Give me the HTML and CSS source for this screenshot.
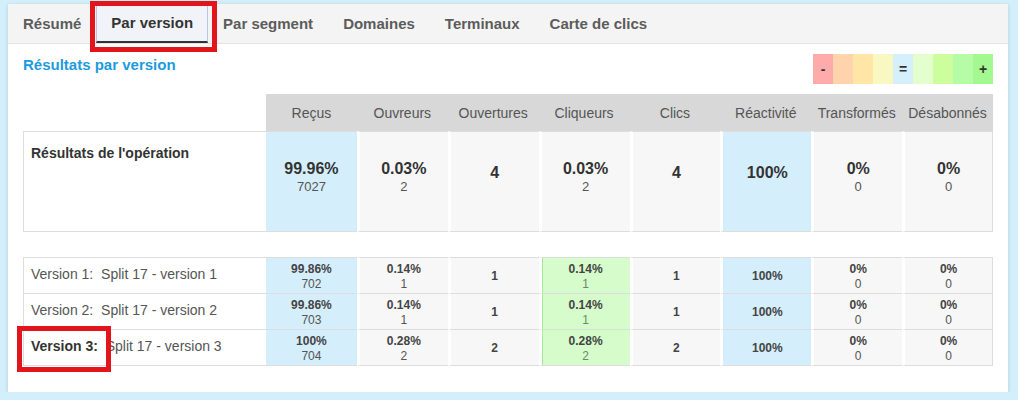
FILE: index.html
```html
<!DOCTYPE html>
<html lang="fr">
<head>
<meta charset="UTF-8">
<meta name="viewport" content="width=device-width, initial-scale=1.0">
<link rel="stylesheet" href="styles.css">
<title>Résultats par version</title>
</head>
<body>

<main class="page">

<div class="card">

<nav class="tabs">
<span class="tab">Résumé</span>
<span class="tab active">Par version<i class="mark markTab"></i></span>
<span class="tab">Par segment</span>
<span class="tab">Domaines</span>
<span class="tab">Terminaux</span>
<span class="tab">Carte de clics</span>
</nav>

<div class="content">

<div class="titleRow">
<h2 class="title">Résultats par version</h2>
<div class="legend">
<b class="c1">-</b><b class="c2"></b><b class="c3"></b><b class="c4"></b><b class="c5">=</b><b class="c6"></b><b class="c7"></b><b class="c8"></b><b class="c9">+</b>
</div>
</div>

<table class="stats mainStats">
<colgroup><col class="labelCol"><col span="8"></colgroup>
<tr>
<th class="blank"></th>
<th>Reçus</th>
<th>Ouvreurs</th>
<th>Ouvertures</th>
<th>Cliqueurs</th>
<th>Clics</th>
<th>Réactivité</th>
<th>Transformés</th>
<th>Désabonnés</th>
</tr>
<tr>
<td class="label">Résultats de l'opération</td>
<td class="blue"><b>99.96%</b><span>7027</span></td>
<td><b>0.03%</b><span>2</span></td>
<td class="one"><b>4</b></td>
<td><b>0.03%</b><span>2</span></td>
<td class="one"><b>4</b></td>
<td class="blue one"><b>100%</b></td>
<td><b>0%</b><span>0</span></td>
<td class="last"><b>0%</b><span>0</span></td>
</tr>
</table>

<table class="stats versions">
<colgroup><col class="labelCol"><col span="8"></colgroup>
<tr>
<td class="label">Version 1:&nbsp; Split 17 - version 1</td>
<td class="blue"><b>99.86%</b><span>702</span></td>
<td><b>0.14%</b><span>1</span></td>
<td><b>1</b></td>
<td class="green"><b>0.14%</b><span>1</span></td>
<td><b>1</b></td>
<td class="blue"><b>100%</b></td>
<td><b>0%</b><span>0</span></td>
<td class="last"><b>0%</b><span>0</span></td>
</tr>
<tr>
<td class="label">Version 2:&nbsp; Split 17 - version 2</td>
<td class="blue"><b>99.86%</b><span>703</span></td>
<td><b>0.14%</b><span>1</span></td>
<td><b>1</b></td>
<td class="green"><b>0.14%</b><span>1</span></td>
<td><b>1</b></td>
<td class="blue"><b>100%</b></td>
<td><b>0%</b><span>0</span></td>
<td class="last"><b>0%</b><span>0</span></td>
</tr>
<tr>
<td class="label"><strong>Version 3:</strong>&nbsp; Split 17 - version 3<i class="mark markVersion"></i></td>
<td class="blue"><b>100%</b><span>704</span></td>
<td><b>0.28%</b><span>2</span></td>
<td><b>2</b></td>
<td class="green"><b>0.28%</b><span>2</span></td>
<td><b>2</b></td>
<td class="blue"><b>100%</b></td>
<td><b>0%</b><span>0</span></td>
<td class="last"><b>0%</b><span>0</span></td>
</tr>
</table>

</div>

</div>

</main>

</body>
</html>
```

FILE: styles.css
```css
*:after,*,*:before{
margin: 0;
padding: 0;
box-sizing: border-box;
}

body{
background: #d3effc;
font-family: "Liberation Sans", Arial, sans-serif;
color: #555;
}

.page{
padding: 4px 10px 0 8px;
}

.card{
width: 1000px;
background: #fff;
box-shadow: 0 1px 4px #00000026;
padding-bottom: 26px;
}



/* tabs */

.tabs{
display: flex;
height: 40px;
background: #f4f4f4;
border-bottom: 1px solid #e3e3e3;
}

.tab{
padding: 0 15px;
font-size: 15px;
font-weight: bold;
line-height: 39px;
color: #5c5c5c;
}

.tab.active{
position: relative;
padding: 0 14px;
height: 39px;
line-height: 36px;
color: #333;
background: #f2f3f8;
border: 1px solid #b9c6e6;
border-bottom: 2px solid #333;
}

.mark{
position: absolute;
border: 5px solid #e2151d;
}

.markTab{
left: -7px;
top: -4px;
width: 127px;
height: 51px;
}

.markVersion{
left: -7px;
top: -4px;
width: 94px;
height: 46px;
}



/* title + legend */

.content{
padding: 0 15px;
}

.titleRow{
display: flex;
justify-content: space-between;
align-items: flex-start;
margin: 10px 0;
}

.title{
font-size: 15px;
line-height: 22px;
color: #1c9be0;
}

.legend{
display: flex;
}

.legend b{
width: 20px;
height: 30px;
line-height: 30px;
text-align: center;
font-size: 14px;
color: #333;
}

.c1{background: #ffabab;}
.c2{background: #ffd3ab;}
.c3{background: #ffe5a6;}
.c4{background: #f9f8c3;}
.c5{background: #d6effc;}
.c6{background: #e2ffcd;}
.c7{background: #cdfe9e;}
.c8{background: #b6fca6;}
.c9{background: #a3f890;}



/* tables */

.stats{
width: 100%;
table-layout: fixed;
border-collapse: separate;
border-spacing: 0;
text-align: center;
}

.labelCol{
width: 243px;
}

.stats th{
height: 37px;
background: #d8d8d8;
font-size: 14px;
font-weight: normal;
color: #555;
}

.stats th.blank{
background: #fff;
}

.stats td{
background: #f7f7f7;
border-left: 3px solid #fff;
border-bottom: 1px solid #ddd;
vertical-align: middle;
}

.stats td b,
.stats td span{
display: block;
}

.stats td.label{
position: relative;
background: #fff;
border-left: 1px solid #ddd;
text-align: left;
padding-left: 7px;
font-size: 14px;
}

.stats td.last{
border-right: 1px solid #ddd;
}

.stats td.blue{
background: #d4eefc;
}

.stats td.label + td{
border-left: none;
}

.mainStats td{
height: 101px;
border-top: 1px solid #ddd;
padding-bottom: 8px;
}

.mainStats td.one{
padding-bottom: 18px;
}

.mainStats td.label{
vertical-align: top;
padding-top: 13px;
font-weight: bold;
color: #333;
}

.mainStats td b{
font-size: 16px;
line-height: 19px;
color: #333;
}

.mainStats td span{
font-size: 13px;
line-height: 18px;
}

.versions{
margin-top: 25px;
}

.versions td{
height: 36px;
padding-top: 2px;
}

.versions td.label{
padding: 0 0 3px 7px;
}

.versions tr:first-child td{
height: 37px;
border-top: 1px solid #ddd;
}

.versions td b,
.versions td span{
font-size: 12px;
line-height: 15px;
}

.versions td b{
color: #444;
}

.versions td.label strong{
color: #333;
}

.versions td.green{
background: #d5fcca;
box-shadow: inset 1px 0 #a9e69b;
}

.versions td.green span{
color: #6b8a66;
}
```
